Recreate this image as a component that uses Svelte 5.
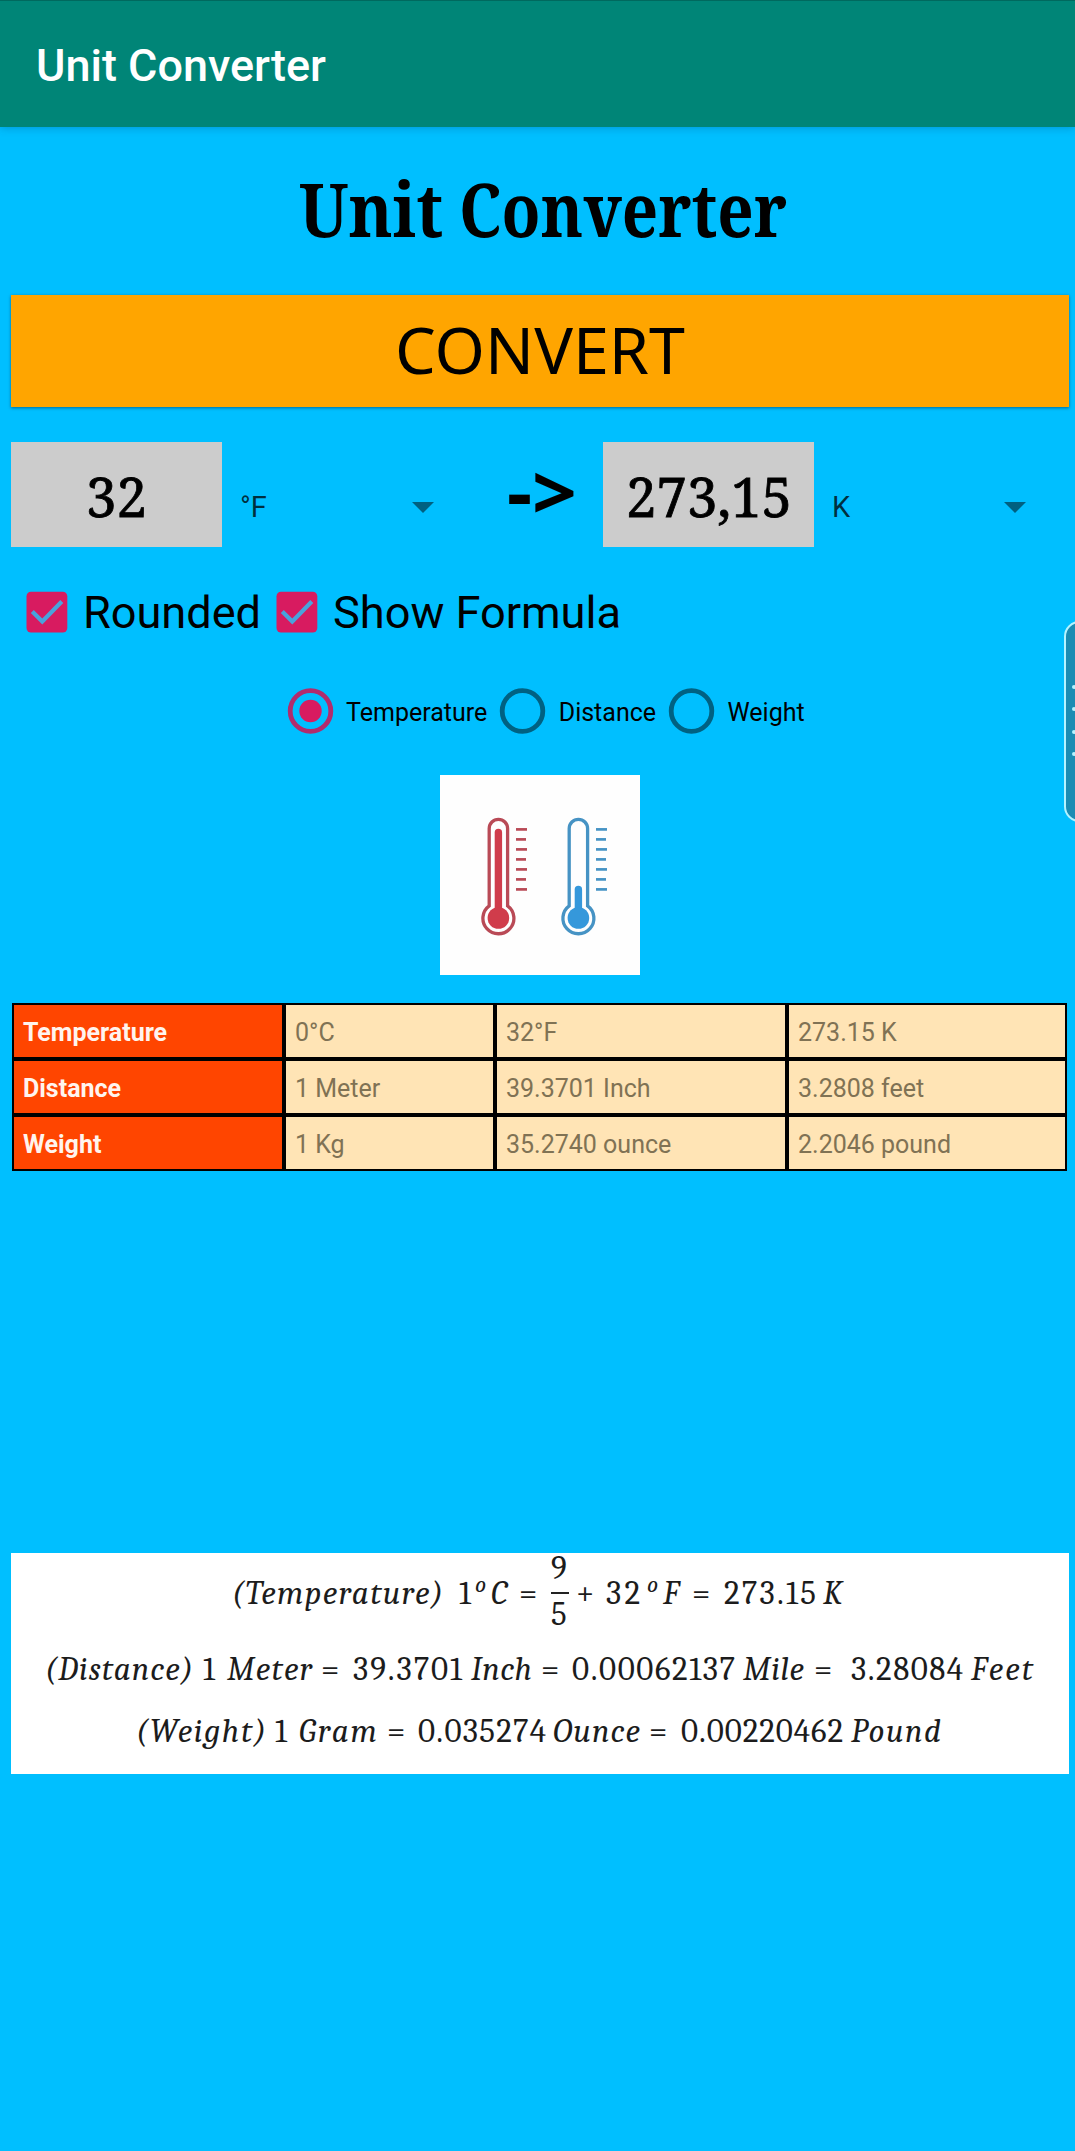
<script>
  const rows = [
    ['Temperature', '0°C', '32°F', '273.15 K'],
    ['Distance', '1 Meter', '39.3701 Inch', '3.2808 feet'],
    ['Weight', '1 Kg', '35.2740 ounce', '2.2046 pound']
  ];

  const quantities = ['Temperature', 'Distance', 'Weight'];
  let selected = $state('Temperature');

  const thermometers = [
    { x: 0, line: '#b94a56', fill: '#d03c4b', top: 57.5 },
    { x: 80, line: '#4693c4', fill: '#3598db', top: 114.5 }
  ];
  const ticks = [0, 1, 2, 3, 4, 5, 6];

  // Formula terms: [text, x, y, width, upright, size]
  const terms = [
    ['(Temperature)', 221, 50, 211],
    ['1', 448, 50, 17, true],
    ['o', 464, 38, 12, false, 23],
    ['C', 480, 50, 20],
    ['=', 508, 50, 22, true],
    ['9', 540, 25, 17, true],
    ['5', 540, 71, 17, true],
    ['+', 565, 50, 22, true],
    ['32', 595, 50, 34, true],
    ['o', 636, 38, 12, false, 23],
    ['F', 652, 50, 20],
    ['=', 681, 50, 22, true],
    ['273.15', 713, 50, 92, true],
    ['K', 812, 50, 22],
    ['(Distance)', 34, 126, 148],
    ['1', 192, 126, 17, true],
    ['Meter', 216, 126, 85],
    ['=', 310, 126, 22, true],
    ['39.3701', 342, 126, 109, true],
    ['Inch', 460, 126, 61],
    ['=', 530, 126, 22, true],
    ['0.00062137', 561, 126, 163, true],
    ['Mile', 732, 126, 61],
    ['=', 803, 126, 22, true],
    ['3.28084', 840, 126, 112, true],
    ['Feet', 960, 126, 62],
    ['(Weight)', 125, 188, 130],
    ['1', 264, 188, 17, true],
    ['Gram', 288, 188, 78],
    ['=', 376, 188, 22, true],
    ['0.035274', 407, 188, 128, true],
    ['Ounce', 542, 188, 87],
    ['=', 638, 188, 22, true],
    ['0.00220462', 670, 188, 162, true],
    ['Pound', 840, 188, 90]
  ];
</script>

{#snippet fitted(text, width, height, size, baseline, kind)}
  <svg class={kind} {width} {height}>
    <text x="0" y={baseline} font-size={size} textLength={width} lengthAdjust="spacingAndGlyphs">{text}</text>
  </svg>
{/snippet}

{#snippet check(label, width)}
  <label class="check">
    <svg width="42" height="42" viewBox="0 0 42 42">
      <rect x="0.5" y="-0.3" width="40.8" height="40.8" rx="4.5" fill="#d81b60" />
      <path d="M6.3 19.5 L16.3 29.5 L35.8 9.5" fill="none" stroke="#4aa3dc" stroke-width="4.2" />
    </svg>
    {@render fitted(label, width, 54, 44.8, 42, 'sans')}
  </label>
{/snippet}

<div class="screen">
  <header>{@render fitted('Unit Converter', 290, 60, 45, 45.7, 'bar-title')}</header>

  <main>
    <h1>
      {@render fitted('Unit', 144, 80, 75, 64, 'serif title')}
      {@render fitted('Converter', 328, 80, 75, 64, 'serif title')}
    </h1>

    <button class="convert">{@render fitted('CONVERT', 290, 70, 63, 58, 'noto')}</button>

    <div class="conversion">
      <div class="value">{@render fitted('32', 61, 60, 55, 52, 'serif number')}</div>
      <div class="unit">°F<i></i></div>
      <div class="arrow">{@render fitted('->', 70, 70, 75, 58, 'noto heavy')}</div>
      <div class="value">{@render fitted('273,15', 166, 60, 55, 52, 'serif number')}</div>
      <div class="unit">K<i></i></div>
    </div>

    <div class="checks">
      {@render check('Rounded', 178)}
      {@render check('Show Formula', 288)}
    </div>

    <div class="radios">
      {#each quantities as q}
        <label class="radio">
          <svg width="45" height="46" viewBox="0 0 45 46">
            {#if selected === q}
              <circle cx="22.5" cy="23" r="20.3" fill="none" stroke="#b12c6d" stroke-width="4.8" />
              <circle cx="22.5" cy="23" r="11.2" fill="#d81b60" />
            {:else}
              <circle cx="22.5" cy="23" r="20.3" fill="none" stroke="#006182" stroke-width="4.8" />
            {/if}
          </svg>
          <span>{q}</span>
        </label>
      {/each}
    </div>

    <svg class="picture" width="200" height="200" viewBox="0 0 200 200">
      <rect width="200" height="200" fill="#fefefe" />
      {#each thermometers as t}
        <g transform="translate({t.x} 0)" fill="none" stroke={t.line}>
          <path d="M49.2 130.8 V53.5 A9.2 9.2 0 0 1 67.6 53.5 V130.8 A15.5 15.5 0 1 1 49.2 130.8 Z" stroke-width="3.3" />
          <path d="M58.4 143 V{t.top}" stroke={t.fill} stroke-width="7.4" stroke-linecap="round" />
          <circle cx="58.4" cy="143" r="10.8" fill={t.fill} stroke="none" />
          {#each ticks as n}
            <path d="M76 {54.4 + n * 10} H{n % 2 ? 86 : 87}" stroke-width="2.7" />
          {/each}
        </g>
      {/each}
    </svg>

    <div class="table">
      {#each rows as row}
        {#each row as cell, i}
          <div class:head={i === 0}>{cell}</div>
        {/each}
      {/each}
    </div>

    <svg class="formula" width="1058" height="221" viewBox="0 0 1058 221">
      <rect width="1058" height="221" fill="#fff" />
      {#each terms as [text, x, y, width, upright, size]}
        <text {x} y={y + 0.7} font-size={size ?? 33} class:upright textLength={text.length > 1 ? width : undefined} lengthAdjust="spacing">{text}</text>
      {/each}
      <path d="M540 40 H558" stroke="#222" stroke-width="2" />
    </svg>
  </main>

  <aside><b></b><b></b><b></b><b></b></aside>
</div>

<style>
  :global(body) {
    margin: 0;
    background: #00bfff;
  }
  .screen {
    position: relative;
    width: 1075px;
    height: 2151px;
    overflow: hidden;
    background: #00bfff;
    font-family: Roboto, 'Liberation Sans', sans-serif;
    color: #000;
  }
  svg {
    display: block;
    overflow: visible;
    flex: none;
  }
  header {
    box-sizing: border-box;
    height: 127px;
    padding: 34px 0 0 36px;
    background: #008577;
    border-top: 1px solid #00695e;
    box-shadow: 0 1px 8px rgba(0, 60, 110, 0.3);
  }
  .bar-title {
    fill: #fff;
    font-weight: 500;
  }
  .serif {
    font-family: 'Noto Serif', 'DejaVu Serif Condensed', 'DejaVu Serif', serif;
  }
  .title {
    font-weight: 700;
  }
  .number {
    stroke: #000;
    stroke-width: 0.8px;
  }
  .noto {
    font-family: 'Noto Sans', 'Open Sans', sans-serif;
  }
  .heavy {
    font-weight: 700;
  }
  main {
    display: flex;
    flex-direction: column;
    padding: 0 6px 0 11px;
  }
  h1 {
    display: flex;
    gap: 16px;
    margin: 46px 0 0 288px;
    height: 122px;
  }
  .convert {
    display: flex;
    justify-content: center;
    align-items: center;
    height: 112px;
    padding: 0;
    border: 0;
    background: #ffa500;
    box-shadow: 0 1px 3px rgba(0, 50, 80, 0.6);
  }
  .conversion {
    display: flex;
    height: 105px;
    margin-top: 35px;
  }
  .value {
    display: flex;
    justify-content: center;
    align-items: center;
    width: 211px;
    background: #ccc;
  }
  .unit {
    display: flex;
    align-items: center;
    justify-content: space-between;
    width: 194px;
    padding: 25px 0 0 18px;
    font-size: 29px;
    color: rgba(0, 0, 0, 0.75);
  }
  .unit i {
    border: 11px solid transparent;
    border-top-color: #006080;
    border-bottom: 0;
  }
  .arrow {
    box-sizing: border-box;
    width: 96px;
    margin-left: 73px;
    padding-top: 20px;
  }
  .checks {
    display: flex;
    gap: 15px;
    height: 54px;
    margin: 39px 0 0 15px;
  }
  .check {
    display: flex;
    align-items: center;
    gap: 15px;
  }
  .radios {
    display: flex;
    gap: 13px;
    margin: 48px 0 0 276.5px;
  }
  .radio {
    display: flex;
    align-items: center;
    gap: 13.5px;
    font-size: 25px;
  }
  .radio span {
    padding-top: 2px;
  }
  .picture {
    margin: 41px 0 0 429px;
  }
  .table {
    display: grid;
    grid-template-columns: 268px 207px 288px 276px;
    grid-auto-rows: 52px;
    gap: 4px;
    width: 1051px;
    margin: 28px 0 0 1px;
    border: 2px solid #000;
    background: #000;
    font-size: 25px;
    line-height: 55px;
  }
  .table div {
    padding-left: 9px;
    background: #ffe4b5;
    color: #807254;
  }
  .table .head {
    background: #ff4500;
    color: #fff4ee;
    font-weight: 700;
  }
  .formula {
    margin-top: 382px;
    font-family: Cambria, Caladea, 'Liberation Serif', serif;
    font-style: italic;
    fill: #1c1c1c;
  }
  .upright {
    font-style: normal;
  }
  /* Edge panel handle floats over the page content */
  aside {
    position: absolute;
    top: 621px;
    right: -20px;
    box-sizing: border-box;
    display: flex;
    flex-direction: column;
    gap: 18.4px;
    width: 31px;
    height: 201px;
    padding: 62px 0 0 6px;
    border: 2px solid #b4f3ff;
    border-radius: 18px;
    background: #1b8cb3;
  }
  aside b {
    width: 4px;
    height: 4px;
    border-radius: 2px;
    background: #b4f3ff;
  }
</style>
